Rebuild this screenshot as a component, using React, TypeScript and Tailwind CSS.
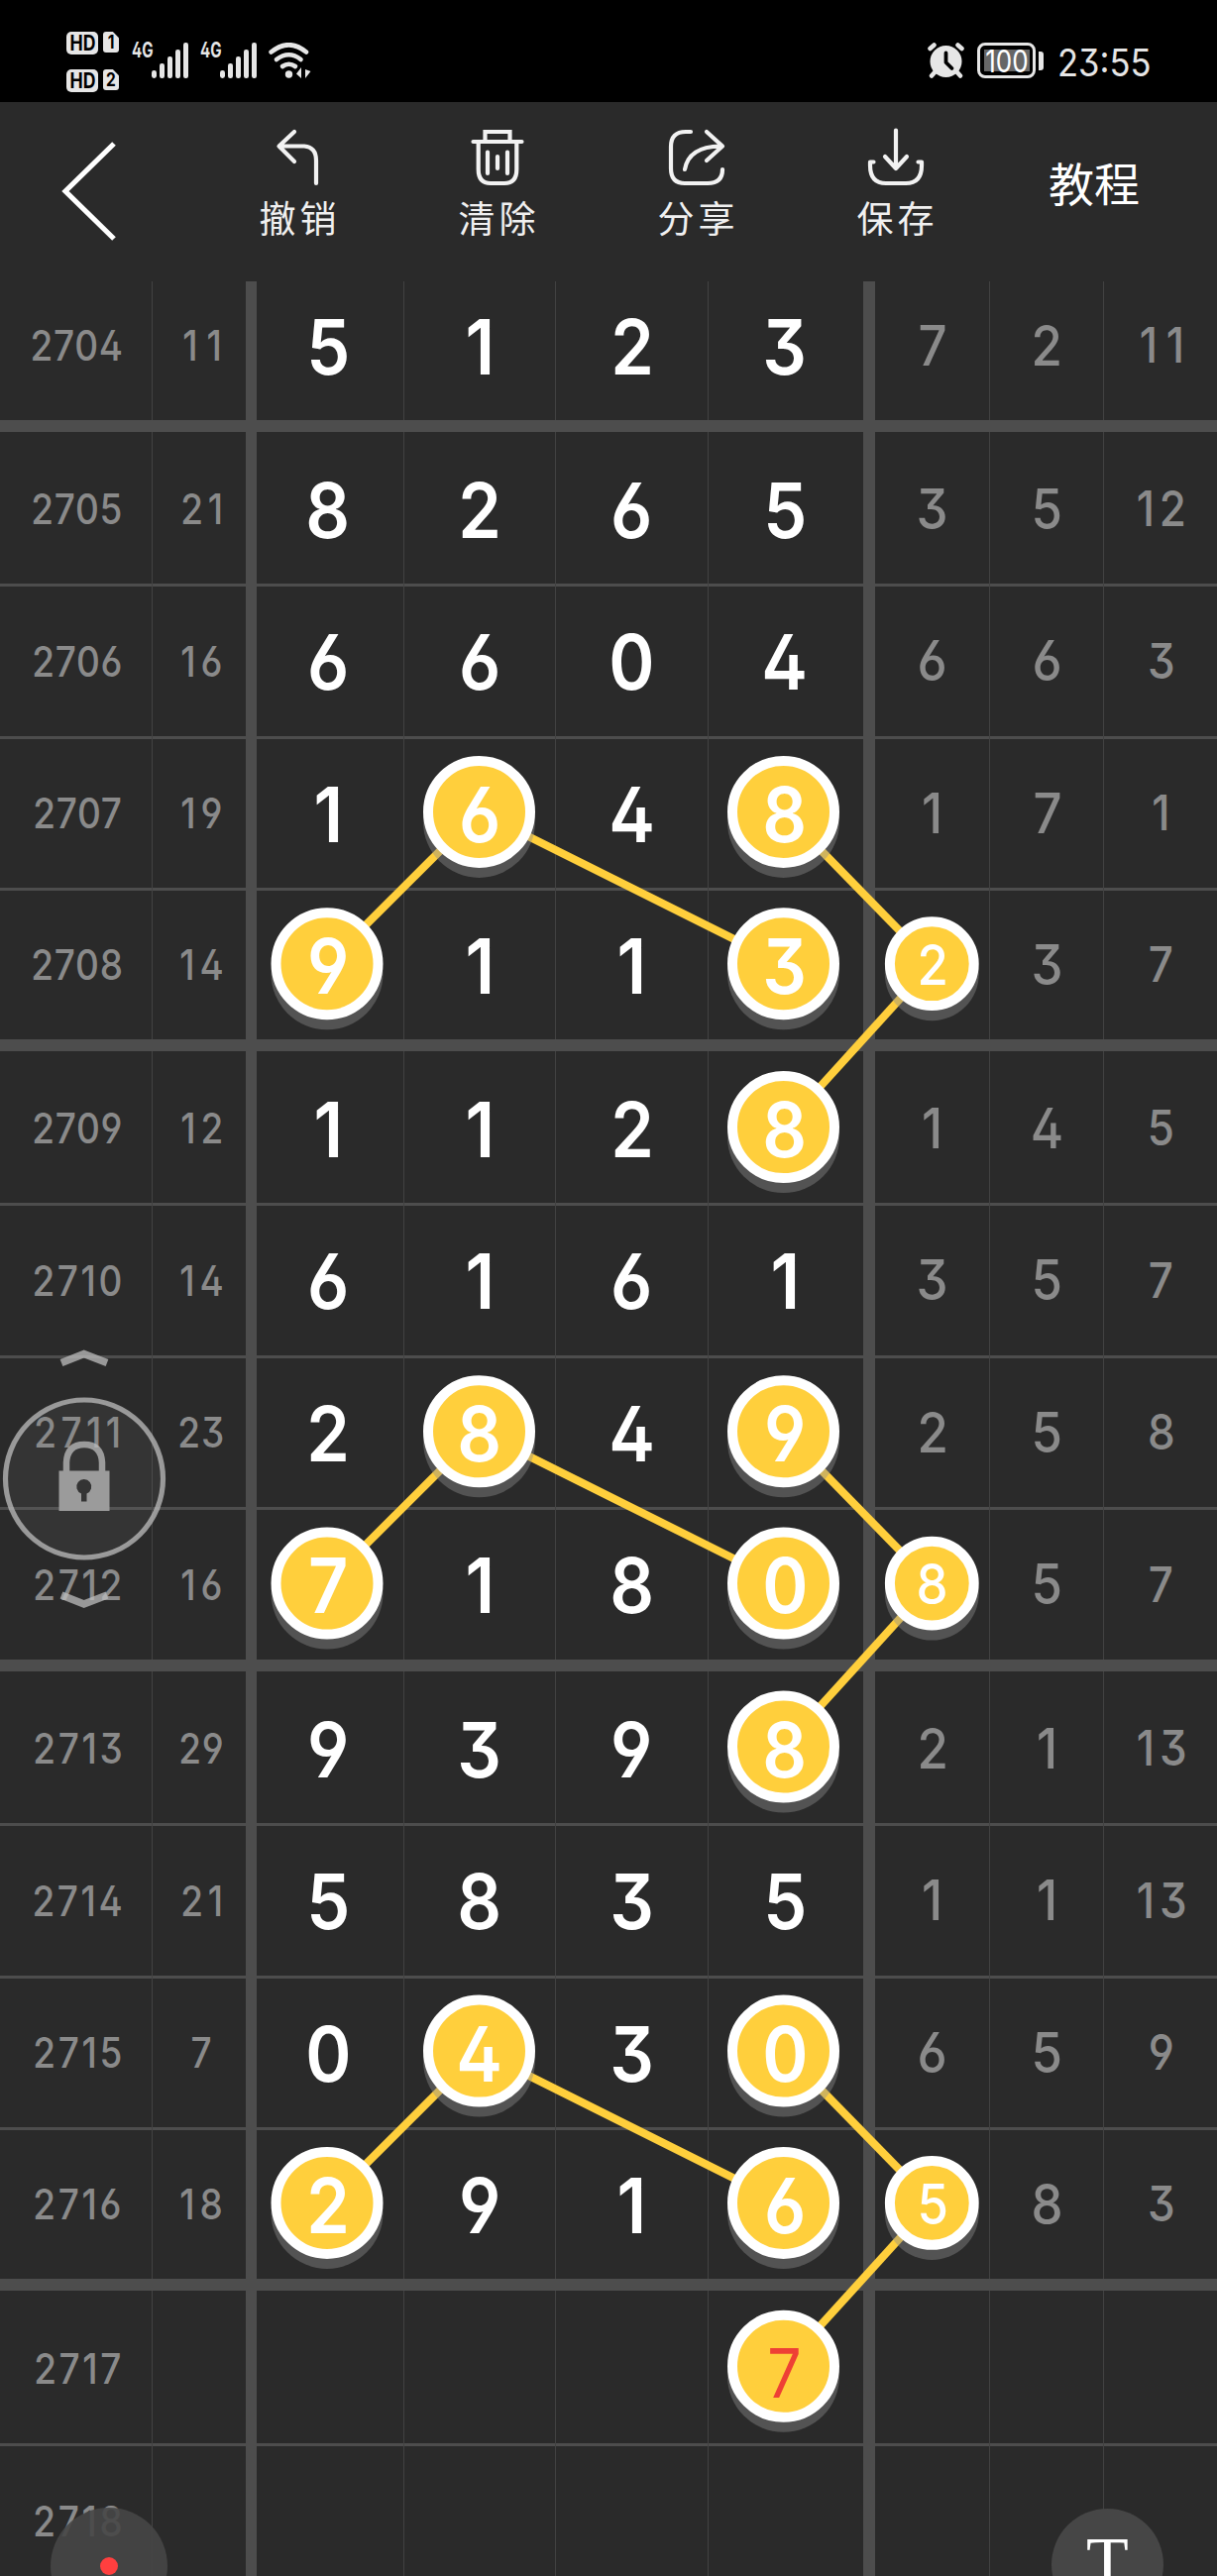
import type { ReactNode } from "react";

type Row = { id: string; sum: string; main: string[]; side: string[]; h: string };

const H153 = "h-[153px]";
const H154 = "h-[154px]";

const groups: Row[][] = [
  [
    { id: "2705", sum: "21", main: ["8", "2", "6", "5"], side: ["3", "5", "12"], h: H153 },
    { id: "2706", sum: "16", main: ["6", "6", "0", "4"], side: ["6", "6", "3"], h: H154 },
    { id: "2707", sum: "19", main: ["1", "6", "4", "8"], side: ["1", "7", "1"], h: H153 },
    { id: "2708", sum: "14", main: ["9", "1", "1", "3"], side: ["2", "3", "7"], h: H153 },
  ],
  [
    { id: "2709", sum: "12", main: ["1", "1", "2", "8"], side: ["1", "4", "5"], h: H153 },
    { id: "2710", sum: "14", main: ["6", "1", "6", "1"], side: ["3", "5", "7"], h: H154 },
    { id: "2711", sum: "23", main: ["2", "8", "4", "9"], side: ["2", "5", "8"], h: H153 },
    { id: "2712", sum: "16", main: ["7", "1", "8", "0"], side: ["8", "5", "7"], h: H154 },
  ],
  [
    { id: "2713", sum: "29", main: ["9", "3", "9", "8"], side: ["2", "1", "13"], h: H153 },
    { id: "2714", sum: "21", main: ["5", "8", "3", "5"], side: ["1", "1", "13"], h: H154 },
    { id: "2715", sum: "7", main: ["0", "4", "3", "0"], side: ["6", "5", "9"], h: H153 },
    { id: "2716", sum: "18", main: ["2", "9", "1", "6"], side: ["5", "8", "3"], h: H153 },
  ],
  [
    { id: "2717", sum: "", main: ["", "", "", "7"], side: ["", "", ""], h: H154 },
    { id: "2718", sum: "", main: ["", "", "", ""], side: ["", "", ""], h: H154 },
  ],
];

const firstRow: Row = { id: "2704", sum: "11", main: ["5", "1", "2", "3"], side: ["7", "2", "11"], h: H153 };

const highlightedSide = new Set(["2708", "2712", "2716"]);

const COLS = "grid-cols-[154px_94px_11px_149px_153px_154px_156px_12px_116px_115px_114px]";

/* The "1" glyph is narrow, so numbers containing it get wider tracking to keep an even digit rhythm. */
function spacing(n: string) {
  if (n.length < 2) return "";
  const ones = n.split("1").length - 1;
  if (n.length === 4) {
    if (ones === 2) return "tracking-[5px] -mr-[5px]";
    return ones === 1 ? "tracking-[3px] -mr-[3px]" : "tracking-[.8px]";
  }
  if (ones === 2) return "tracking-[10px] -mr-[10px]";
  return ones === 1 ? "tracking-[5.5px] -mr-[5.5px]" : "tracking-[1px]";
}

function TableRow({ row, line }: { row: Row; line: boolean }) {
  return (
    <div
      className={`grid w-full items-stretch ${COLS} ${row.h} ${
        line ? "shadow-[inset_0_3px_0_#4d4d4d]" : ""
      }`}
    >
      <div className="flex items-center justify-center border-r border-[#424242] pl-[3px]">
        <span className={`relative top-[1px] z-10 scale-x-[.88] text-[42px] font-medium text-[#8a8a8a] ${spacing(row.id)}`}>{row.id}</span>
      </div>
      <div className="flex items-center justify-center pl-[4px]">
        <span className={`relative top-[1px] z-10 scale-x-[.88] text-[42px] font-medium text-[#8a8a8a] ${spacing(row.sum)}`}>{row.sum}</span>
      </div>
      <div className="bg-[#4d4d4d]" />
      {row.main.map((n, i) => (
        <div
          key={i}
          className={`flex items-center justify-center ${i < 3 ? "border-r border-[#424242]" : "pr-[2px]"} ${i === 0 ? "-ml-[4px]" : ""}`}
        >
          <span
            className={`relative z-10 ${
              row.id === "2717"
                ? "top-[7px] scale-x-[.88] text-[69px] font-normal text-[#ee4035]"
                : "top-[3px] scale-x-[.91] text-[77px] font-semibold text-white"
            }`}
          >
            {n}
          </span>
        </div>
      ))}
      <div className="bg-[#4d4d4d]" />
      {row.side.map((n, i) => (
        <div key={i} className={`flex items-center justify-center pl-[1px] ${i < 2 ? "border-r border-[#424242]" : ""}`}>
          <span
            className={`relative top-[1px] z-10 font-medium ${i === 2 ? "scale-x-[.88] text-[50px]" : "scale-x-[.91] text-[56px]"} ${spacing(n)} ${
              i === 0 && highlightedSide.has(row.id) ? "text-white" : "text-[#8a8a8a]"
            }`}
          >
            {n}
          </span>
        </div>
      ))}
    </div>
  );
}

/* Trend marks: coordinates are relative to the table's top-left corner. */
function Trend({ y }: { y: number }) {
  const top = y;
  const mid = y + 153.3;
  const bot = y + 318.2;
  const big: [number, number][] = [
    [483.5, top],
    [790.5, top],
    [330, mid],
    [790.5, mid],
    [790.5, bot],
  ];
  return (
    <g>
      <g stroke="#ffcf3c" strokeWidth="8">
        <line x1="483.5" y1={top} x2="330" y2={mid} />
        <line x1="483.5" y1={top} x2="790.5" y2={mid} />
        <line x1="790.5" y1={top} x2="940.3" y2={mid} />
        <line x1="940.3" y1={mid} x2="790.5" y2={bot} />
      </g>
      <g fill="#8c8c8c" fillOpacity=".42">
        {big.map(([x, cy], i) => (
          <circle key={i} cx={x} cy={cy + 10} r="56.5" />
        ))}
        <circle cx="940.3" cy={mid + 10} r="47.5" />
      </g>
      <g fill="#ffcf3c" stroke="#fff" strokeWidth="10">
        {big.map(([x, cy], i) => (
          <circle key={i} cx={x} cy={cy} r="51.5" />
        ))}
        <circle cx="940.3" cy={mid} r="42.4" />
      </g>
    </g>
  );
}

function Signal() {
  return (
    <div className="flex items-start">
      <span className="mt-[-1px] inline-block w-[20px] origin-left scale-x-[.72] text-[21px] leading-[18px] font-bold text-[#e6e6e6]">4G</span>
      <svg className="h-[36px] w-[37px]" viewBox="0 0 37 36" fill="#e6e6e6">
        <rect x="0" y="28" width="5" height="8" rx="2.4" />
        <rect x="8" y="21" width="5" height="15" rx="2.2" />
        <rect x="16" y="14" width="5" height="22" rx="2.2" />
        <rect x="24" y="7" width="5" height="29" rx="2.2" />
        <rect x="32" y="0" width="5" height="36" rx="2.2" />
      </svg>
    </div>
  );
}

function HdBadge({ n }: { n: string }) {
  return (
    <div className="flex items-start gap-[5px] text-black">
      <span className="flex h-[23px] w-[32px] items-center justify-center rounded-[5px] bg-[#e6e6e6]">
        <span className="scale-x-[.84] text-[21px] leading-none font-bold">HD</span>
      </span>
      <span className="flex h-[21px] w-[16px] items-center justify-center rounded-[3px] bg-[#e6e6e6] [clip-path:polygon(0_0,62%_0,100%_30%,100%_100%,0_100%)]">
        <span className="scale-x-[.82] text-[19px] leading-none font-bold">{n}</span>
      </span>
    </div>
  );
}

function StatusBar() {
  return (
    <div className="flex h-[103px] w-full items-start bg-black">
      <div className="mt-[32px] ml-[67px] flex flex-col gap-[15px]">
        <HdBadge n="1" />
        <HdBadge n="2" />
      </div>
      <div className="mt-[43px] ml-[13px] flex gap-[12px]">
        <Signal />
        <Signal />
        <svg className="h-[38px] w-[44px]" viewBox="0 0 44 38" fill="none" stroke="#e6e6e6" strokeWidth="4.6" strokeLinecap="round">
          <path d="M2.6 9.5Q20.5-5 38 9.5" />
          <path d="M8 17Q20.5 7.5 32.5 17" />
          <path d="M14 24Q20.5 19.5 27 24" />
          <circle cx="20.5" cy="32" r="3.7" fill="#e6e6e6" stroke="none" />
          <path d="M33 25v11l-5-4.5zM37 27v9l5.5-7z" fill="#e6e6e6" stroke="none" />
        </svg>
      </div>
      <div className="mt-[43px] mr-[67px] ml-auto flex items-start">
        <svg className="h-[36px] w-[37px]" viewBox="0 0 37 36">
          <circle cx="18.5" cy="19" r="16" fill="#e6e6e6" />
          <path d="M8 29l-4 4.5M29 29l4 4.5M2.5 6l4-3.5M34.5 6l-4-3.5" stroke="#e6e6e6" strokeWidth="4.5" strokeLinecap="round" />
          <path d="M18.5 10.5v9.5l6 6" fill="none" stroke="#000" strokeWidth="3.8" strokeLinecap="round" strokeLinejoin="round" />
        </svg>
        <div className="ml-[13px] flex h-[36px] w-[59px] items-center justify-center rounded-[8px] border-[3px] border-[#e6e6e6]">
          <div className="flex h-[22px] w-[46px] items-center justify-center bg-[#666]">
            <span className="scale-x-[.84] text-[31px] leading-none font-normal text-white">100</span>
          </div>
        </div>
        <div className="mt-[9px] ml-[3px] h-[19px] w-[5px] rounded-r-[3px] bg-[#e6e6e6]" />
        <div className="mt-[2px] ml-[14px] w-[94px]">
          <span className="inline-block origin-left scale-x-[.91] text-[38px] leading-[36px] text-[#e6e6e6]">23:55</span>
        </div>
      </div>
    </div>
  );
}

function Tool({ label, children }: { label: string; children: ReactNode }) {
  return (
    <button className="flex w-[201px] flex-col items-center">
      <svg className="h-[62px] w-[60px]" viewBox="0 0 60 62" fill="none" stroke="#f2f2f2" strokeWidth="4.2" strokeLinecap="round" strokeLinejoin="round">
        {children}
      </svg>
      <span className="mt-[9px] pl-[4px] text-[37px] leading-[44px] tracking-[4px] text-[#f0f0f0]">{label}</span>
    </button>
  );
}

function Toolbar() {
  return (
    <div className="flex h-[181px] w-full items-start">
      <svg className="mt-[38px] ml-[60px] h-[104px] w-[60px]" viewBox="0 0 60 104" fill="none" stroke="#fff" strokeWidth="5.2">
        <path d="M55 4L6 52l49 48" />
      </svg>
      <div className="mt-[26px] ml-[80px] flex">
        <Tool label="撤销">
          <path d="M26 4L10.500 18.500L26 34M11 18.500H36Q48 19.500 48 33V56" />
        </Tool>
        <Tool label="清除">
          <path strokeLinecap="butt" strokeLinejoin="miter" d="M17.500 14V4H42.500V14" />
          <path d="M5.500 14H54.500M10.700 14V42Q10.700 56 23 56H37Q49.300 56 49.300 42V14M20 24.500V46M30 29V41M40 24.500V46" />
        </Tool>
        <Tool label="分享">
          <path d="M24 4H19Q4 4 4 19V41Q4 56 18 56H41Q56 56 56 42M18 42Q22 19 54 18.500M40 4L56 18.500L40 33" />
        </Tool>
        <Tool label="保存">
          <path d="M30 2.500V40M19 29L30 41L41 29M7.500 34.500H4V38Q4 56 20 56H40Q56 56 56 38V34.500H52.500" />
        </Tool>
      </div>
      <button className="mt-[55px] ml-[54px] text-[46px] leading-[56px] text-white">教程</button>
    </div>
  );
}

export default function App() {
  return (
    <div className="relative h-[2600px] w-[1228px] overflow-hidden bg-[#2a2a2a] font-['Inter','Noto_Sans_CJK_SC',sans-serif] [font-feature-settings:'ss01']">
      <StatusBar />
      <Toolbar />
      <div className="relative h-[2316px] w-full overflow-hidden">
        <svg className="absolute top-0 left-0 h-full w-full" viewBox="0 0 1228 2316">
          <Trend y={535.4} />
          <Trend y={1160.8} />
          <Trend y={1786.1} />
        </svg>
        <div className="flex h-[140px] items-end overflow-hidden">
          <TableRow row={firstRow} line={false} />
        </div>
        {groups.map((g, gi) => (
          <div key={gi}>
            <div className="h-[12px] bg-[#4d4d4d]" />
            {g.map((r, i) => (
              <TableRow key={r.id} row={r} line={i > 0} />
            ))}
          </div>
        ))}
      </div>

      <svg className="absolute top-[1355px] left-0 z-20 h-[275px] w-[170px]" viewBox="0 0 170 275">
        <g fill="none" stroke="#bdbdbd" strokeOpacity=".75">
          <path d="M62 20.500L84.700 11.500L108 20.500" strokeWidth="7.500" />
          <path d="M62 255L84.700 264L108 255" strokeWidth="7.500" />
          <circle cx="85" cy="137.500" r="79.500" strokeWidth="5.200" fill="#808080" fillOpacity=".12" />
          <path d="M67 130V121Q68 103 85 103Q102 103 103 121V130" strokeWidth="6.500" />
        </g>
        <path
          d="M59.500 129.500H110.500V170H59.500ZM82 160.500H87.500V152.500A7.500 7.500 0 1 0 82 152.500Z"
          fillRule="evenodd"
          fill="#9b9b9b"
        />
      </svg>
      <div className="absolute top-[2531px] left-[51px] z-20 flex h-[118px] w-[118px] items-center justify-center rounded-full bg-[#464646]/90">
        <div className="h-[18px] w-[18px] rounded-full bg-[#ff3f3f]" />
      </div>
      <div className="absolute top-[2532px] left-[1061px] z-20 flex h-[113px] w-[113px] justify-center rounded-full bg-[#464646]">
        <span className="mt-[19px] font-['Liberation_Serif',serif] text-[70px] leading-[70px] text-white">T</span>
      </div>
    </div>
  );
}
